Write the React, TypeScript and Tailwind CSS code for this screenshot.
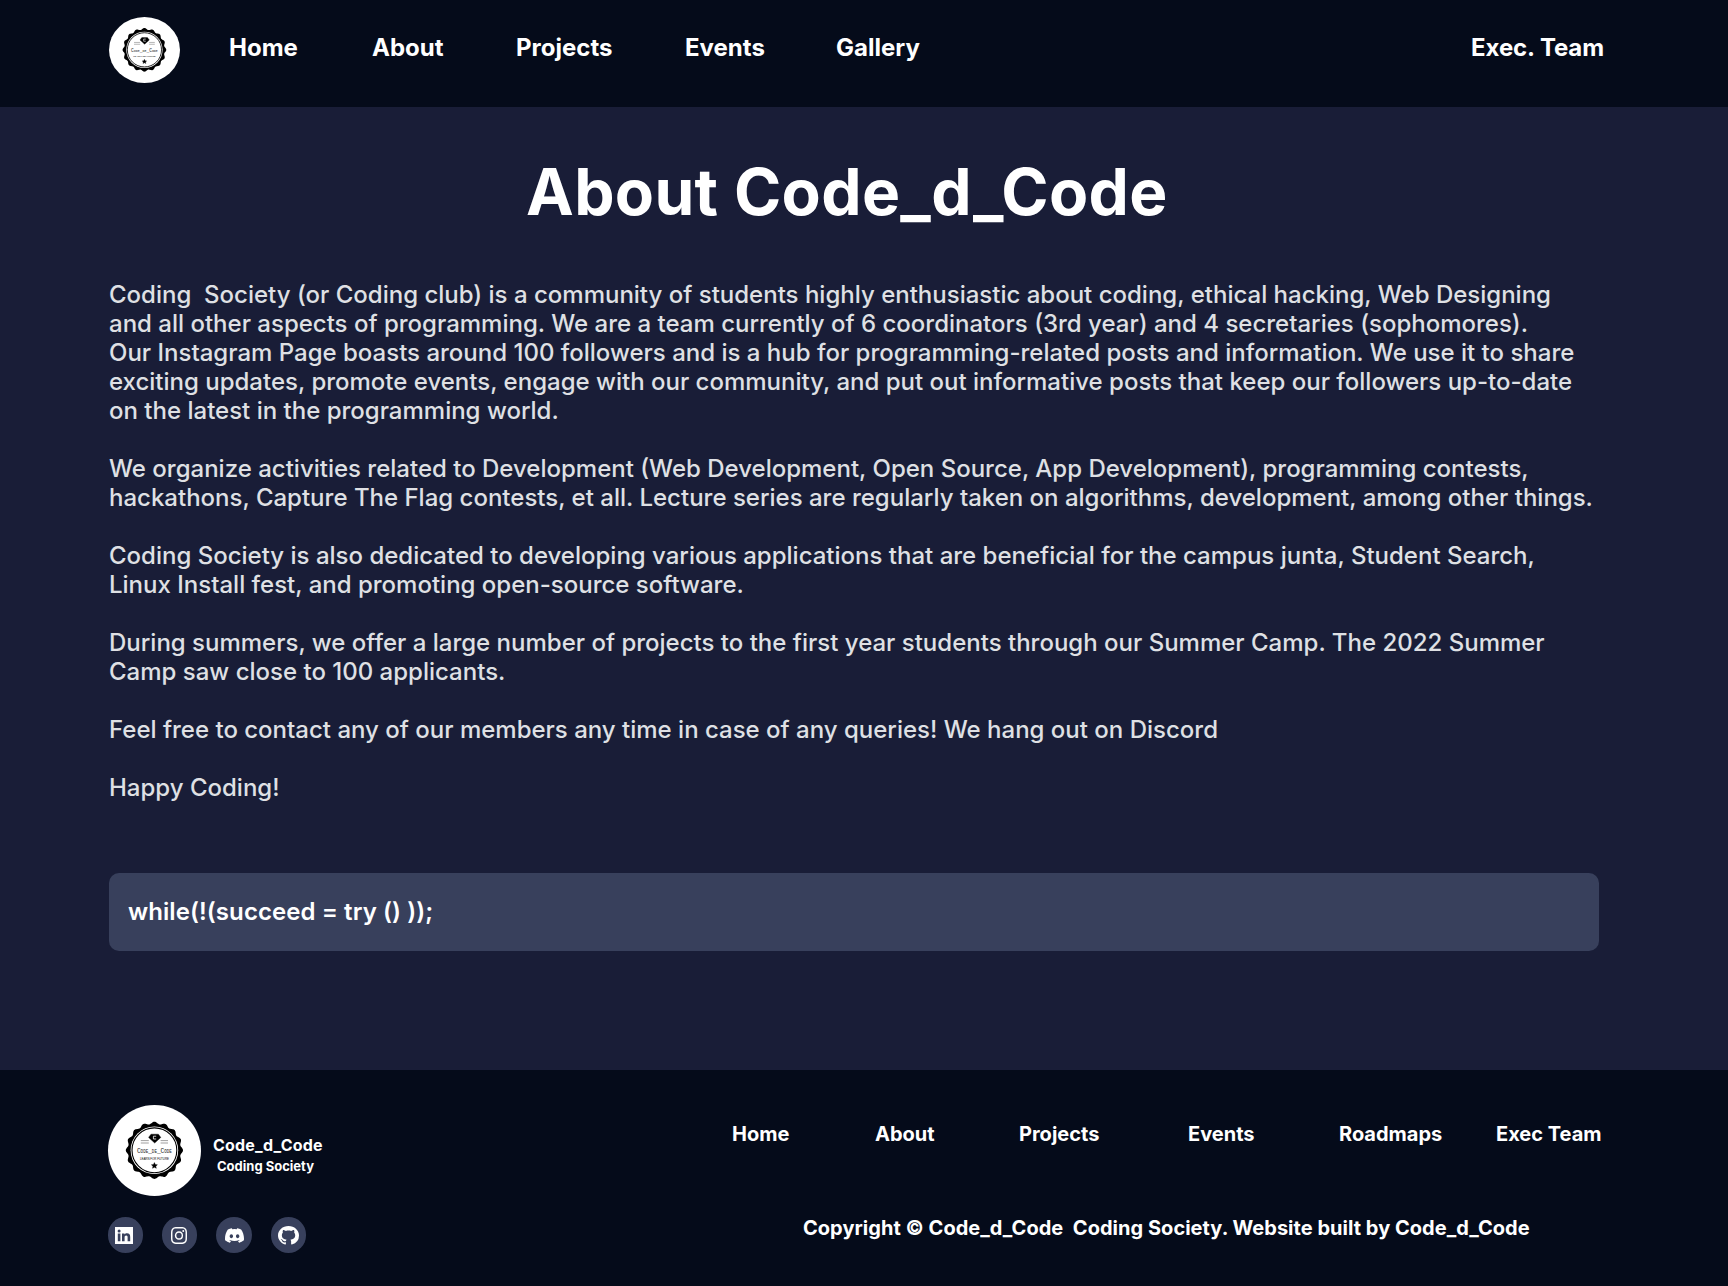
import { BsInstagram, BsDiscord, BsGithub } from "react-icons/bs";

const BUMPS = 16;
const scallop = (() => {
  const points: string[] = [];
  for (let i = 0; i < 256; i++) {
    const a = (i / 256) * Math.PI * 2 - Math.PI / 2;
    const wave = (1 + Math.cos(BUMPS * (a + Math.PI / 2))) / 2;
    const r = 26.4 + 2.2 * wave;
    points.push(`${(46.4 + r * Math.cos(a)).toFixed(2)} ${(45.3 + r * Math.sin(a)).toFixed(2)}`);
  }
  return `M${points.join("L")}Z`;
})();

function Logo({ className }: { className: string }) {
  return (
    <svg viewBox="0 0 93 91" preserveAspectRatio="xMidYMid slice" className={`rounded-[50%] bg-white ${className}`} aria-label="Code_de_Code">
      <path d={scallop} fill="#000" />
      <circle cx="46.4" cy="45.3" r="23.8" fill="#fff" />
      <circle cx="46.4" cy="45.3" r="22.4" fill="none" stroke="#000" strokeWidth="1.1" />
      <path d="M43 29.2h7.4l2.4 3.2-6.1 5.6-6.1-5.6z" fill="#000" stroke="#000" strokeWidth="0.4" />
      <path d="M48.2 31.2h-2.8v2.8h2.8" fill="none" stroke="#fff" strokeWidth="0.8" />
      <path d="M32.8 35.6h8M32.8 38h8M52.6 35.6h7.4M52.6 38h7.4" stroke="#777" strokeWidth="0.7" />
      <text x="46.4" y="48.4" textAnchor="middle" textLength="35" lengthAdjust="spacingAndGlyphs" fontFamily="Liberation Mono, monospace" fontSize="7.4" fill="#222" style={{ fontVariant: "small-caps" }}>
        Code_de_Code
      </text>
      <text x="46.4" y="54.7" textAnchor="middle" textLength="29" lengthAdjust="spacingAndGlyphs" fontFamily="Liberation Sans, sans-serif" fontSize="3.3" fill="#000">
        LEARN FOR FUTURE
      </text>
      <path d="M46.4 57.6l.9 2 2.1.2-1.6 1.4.5 2.1-1.9-1.1-1.9 1.1.5-2.1-1.6-1.4 2.1-.2z" fill="#000" stroke="#000" strokeWidth="0.4" />
    </svg>
  );
}

function LinkedIn({ className }: { className: string }) {
  return (
    <svg viewBox="0 0 18 17" className={className}>
      <path fill="currentColor" d="M0 0h18v17H0z" />
      <g fill="#38405c">
        <circle cx="4.1" cy="4" r="1.5" />
        <path d="M2.8 6.5h2.6v7.7H2.8zM7 6.5h2.5v1.1c.5-.8 1.4-1.3 2.5-1.3 2.4 0 3.2 1.4 3.2 3.6v4.3h-2.6v-3.9c0-1.1-.3-1.8-1.4-1.8s-1.6.8-1.6 1.8v3.9H7z" />
      </g>
    </svg>
  );
}

const paragraphs = [
  [
    "Coding  Society (or Coding club) is a community of students highly enthusiastic about coding, ethical hacking, Web Designing",
    "and all other aspects of programming. We are a team currently of 6 coordinators (3rd year) and 4 secretaries (sophomores).",
    "Our Instagram Page boasts around 100 followers and is a hub for programming-related posts and information. We use it to share",
    "exciting updates, promote events, engage with our community, and put out informative posts that keep our followers up-to-date",
    "on the latest in the programming world.",
  ],
  [
    "We organize activities related to Development (Web Development, Open Source, App Development), programming contests,",
    "hackathons, Capture The Flag contests, et all. Lecture series are regularly taken on algorithms, development, among other things.",
  ],
  [
    "Coding Society is also dedicated to developing various applications that are beneficial for the campus junta, Student Search,",
    "Linux Install fest, and promoting open-source software.",
  ],
  [
    "During summers, we offer a large number of projects to the first year students through our Summer Camp. The 2022 Summer",
    "Camp saw close to 100 applicants.",
  ],
  ["Feel free to contact any of our members any time in case of any queries! We hang out on Discord"],
  ["Happy Coding!"],
];

const social = [
  { label: "LinkedIn", size: "w-[35px]", icon: <LinkedIn className="mr-[3px] h-[17px] w-[18px]" /> },
  { label: "Instagram", size: "w-[35px]", icon: <BsInstagram className="mr-px h-[17px] w-4" preserveAspectRatio="none" /> },
  { label: "Discord", size: "w-9", icon: <BsDiscord className="ml-px size-[19px]" /> },
  { label: "GitHub", size: "w-[35px]", icon: <BsGithub className="h-[19px] w-[21px]" preserveAspectRatio="none" /> },
];

export default function App() {
  return (
    <div className="flex h-[1286px] w-[1728px] flex-col overflow-hidden bg-[#191d37] font-['Inter',sans-serif] text-white">
      <header className="flex h-[107px] shrink-0 items-start bg-[#050b1a] pl-[109px]">
        <Logo className="mt-[17px] h-[66px] w-[71px]" />
        <nav className="mt-[33px] ml-[49px] flex text-2xl leading-[29px] font-bold whitespace-nowrap">
          <a className="w-[143px]">Home</a>
          <a className="w-36">About</a>
          <a className="w-[169px]">Projects</a>
          <a className="w-[151px]">Events</a>
          <a>Gallery</a>
        </nav>
        <a className="mt-[33px] mr-[124px] ml-auto text-2xl leading-[29px] font-bold tracking-[-0.1px]">Exec. Team</a>
      </header>

      <main className="flex grow flex-col px-[109px]">
        <h1 className="mt-[46px] ml-[417px] text-[64px] leading-[77px] font-bold tracking-[0.35px] whitespace-nowrap">About Code_d_Code</h1>
        <div className="mt-[50px] flex flex-col gap-[29px] text-2xl leading-[29px] font-medium whitespace-pre text-[#dfe0e4]">
          {paragraphs.map((lines) => (
            <p key={lines[0]}>{lines.join("\n")}</p>
          ))}
        </div>
        <div className="mt-[71px] flex h-[78px] w-[1490px] items-center rounded-[10px] bg-[#38405c] pb-0.5 pl-[19px] text-2xl leading-[29px] font-semibold tracking-[0.08px]">
          while(!(succeed = try () ));
        </div>
      </main>

      <footer className="flex h-[216px] shrink-0 bg-[#050b1a] pl-[108px]">
        <div className="flex w-[624px] flex-col pt-[35px]">
          <div className="flex">
            <Logo className="h-[91px] w-[93px]" />
            <div className="mt-[31px] ml-3 flex flex-col font-bold">
              <span className="text-base leading-[19px] tracking-[0.2px]">Code_d_Code</span>
              <span className="ml-1 text-[13px] leading-[22px]">Coding Society</span>
            </div>
          </div>
          <div className="mt-[21px] flex gap-[19px]">
            {social.map((s) => (
              <a key={s.label} aria-label={s.label} className={`flex h-9 items-center justify-center rounded-full bg-[#38405c] ${s.size}`}>
                {s.icon}
              </a>
            ))}
          </div>
        </div>
        <div className="flex flex-col pt-[52px] text-xl leading-6 font-bold whitespace-nowrap">
          <nav className="flex">
            <a className="w-[143px]">Home</a>
            <a className="w-36">About</a>
            <a className="w-[169px]">Projects</a>
            <a className="w-[151px]">Events</a>
            <a className="w-[157px]">Roadmaps</a>
            <a>Exec Team</a>
          </nav>
          <p className="mt-[70px] ml-[71px] tracking-[0.03px] whitespace-pre">Copyright © Code_d_Code  Coding Society. Website built by Code_d_Code</p>
        </div>
      </footer>
    </div>
  );
}
